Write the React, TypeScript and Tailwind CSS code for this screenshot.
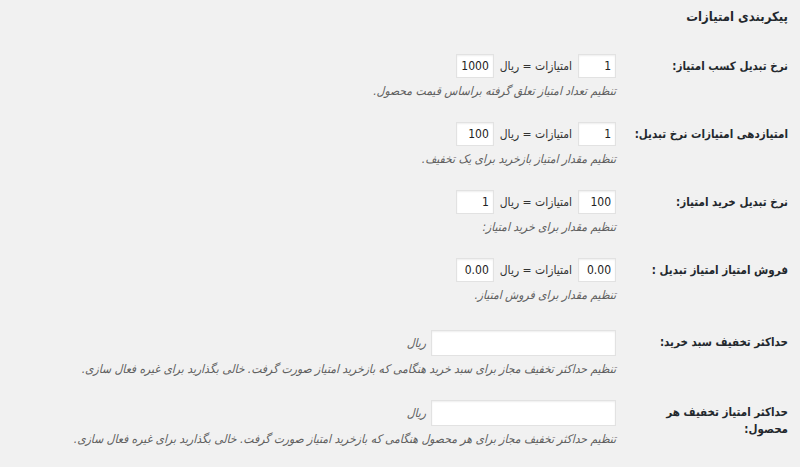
import React from "react";

const font = { fontFamily: '"DejaVu Sans Condensed", "DejaVu Sans", Tahoma, sans-serif' };

function SmallInput({ v }: { v: string }) {
  return (
    <input
      defaultValue={v}
      className="w-[38px] h-[24px] bg-white border border-[#e2e2e2] shadow-[inset_0_1px_2px_rgba(0,0,0,0.07)] px-[4px] text-[12px] text-[#222] text-right outline-none"
      style={font}
    />
  );
}

function Desc({ children }: { children: React.ReactNode }) {
  return <div className="mt-[4px] whitespace-nowrap text-[12px] leading-[18px] italic text-[#5f5f5f]">{children}</div>;
}

function Row({
  label,
  children,
  desc,
  className = "",
}: {
  label: React.ReactNode;
  children: React.ReactNode;
  desc: string;
  className?: string;
}) {
  return (
    <div className={"flex items-start gap-[22px] " + className}>
      <div className="w-[150px] shrink-0 pt-[4px] whitespace-nowrap text-[11.5px] leading-[17px] font-bold text-[#23282d]">
        {label}
      </div>
      <div className="flex flex-col">
        <div className="flex items-center">{children}</div>
        <Desc>{desc}</Desc>
      </div>
    </div>
  );
}

function Pair({ a, b }: { a: string; b: string }) {
  return (
    <>
      <SmallInput v={a} />
      <span className="mx-[6px] text-[12px] text-[#333]">امتیازات = ریال</span>
      <SmallInput v={b} />
    </>
  );
}

function Wide() {
  return (
    <>
      <input
        className="w-[185px] h-[26px] bg-white border border-[#e2e2e2] shadow-[inset_0_1px_2px_rgba(0,0,0,0.07)] px-[6px] text-[12px] outline-none"
        style={font}
      />
      <span className="mr-[5px] text-[12px] italic text-[#5f5f5f]">ریال</span>
    </>
  );
}

export default function App() {
  return (
    <div dir="rtl" className="w-[800px] h-[467px] overflow-hidden bg-[#f1f1f1] pr-[12px]" style={font}>
      <h2 className="pt-[8px] text-[13px] leading-[18px] font-bold text-[#23282d]">پیکربندی امتیازات</h2>
      <div className="mt-[28px] flex flex-col gap-[22px]">
        <Row label="نرخ تبدیل کسب امتیاز:" desc="تنظیم تعداد امتیاز تعلق گرفته براساس قیمت محصول.">
          <Pair a="1" b="1000" />
        </Row>
        <Row label="امتیازدهی امتیازات نرخ تبدیل:" desc="تنظیم مقدار امتیاز بازخرید برای یک تخفیف.">
          <Pair a="1" b="100" />
        </Row>
        <Row label="نرخ تبدیل خرید امتیاز:" desc="تنظیم مقدار برای خرید امتیاز:">
          <Pair a="100" b="1" />
        </Row>
        <Row label="فروش امتیاز امتیاز تبدیل :" desc="تنظیم مقدار برای فروش امتیاز.">
          <Pair a="0.00" b="0.00" />
        </Row>
        <Row
          className="mt-[4px]"
          label="حداکثر تخفیف سبد خرید:"
          desc="تنظیم حداکثر تخفیف مجاز برای سبد خرید هنگامی که بازخرید امتیاز صورت گرفت. خالی بگذارید برای غیره فعال سازی."
        >
          <Wide />
        </Row>
        <Row
          label={
            <>
              حداکثر امتیاز تخفیف هر
              <br />
              محصول:
            </>
          }
          desc="تنظیم حداکثر تخفیف مجاز برای هر محصول هنگامی که بازخرید امتیاز صورت گرفت. خالی بگذارید برای غیره فعال سازی."
        >
          <Wide />
        </Row>
      </div>
    </div>
  );
}
